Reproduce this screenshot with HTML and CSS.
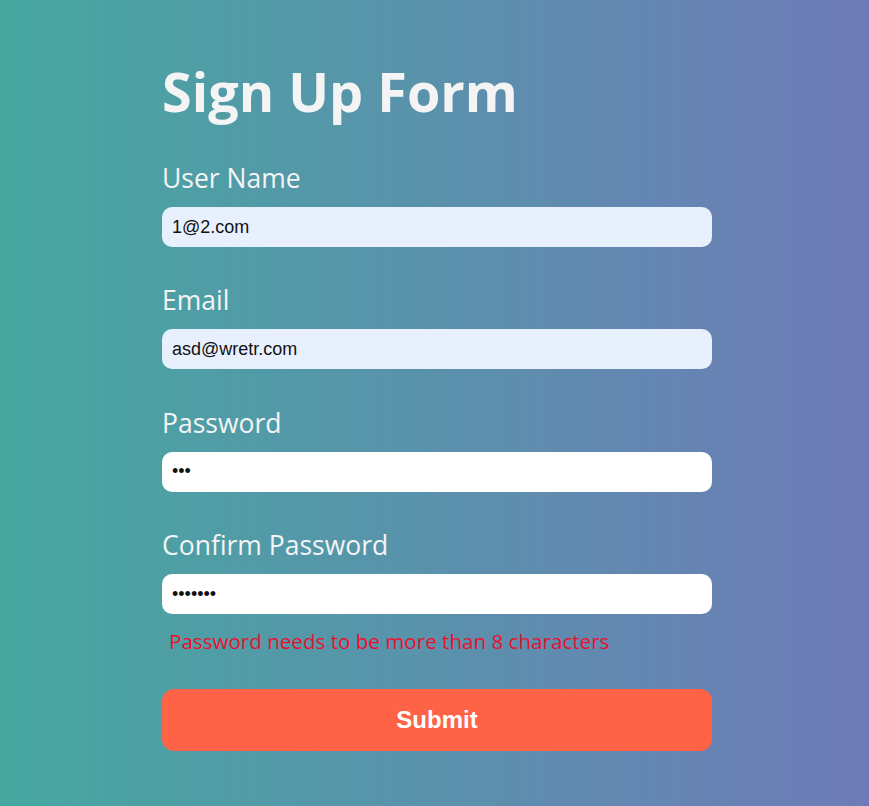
FILE: index.html
```html
<!DOCTYPE html>
<html lang="en">
<head>
<meta charset="utf-8">
<title>Sign Up Form</title>
<link rel="stylesheet" href="styles.css">
</head>
<body>
<main class="page">
  <form class="form">
    <h1 class="title">Sign Up Form</h1>
    <div class="field">
      <label class="label" for="user">User Name</label>
      <input class="input autofill" id="user" type="text" value="1@2.com">
    </div>
    <div class="field">
      <label class="label" for="email">Email</label>
      <input class="input autofill" id="email" type="text" value="asd@wretr.com">
    </div>
    <div class="field">
      <label class="label" for="pw">Password</label>
      <input class="input" id="pw" type="password" value="abc">
    </div>
    <div class="field field-last">
      <label class="label" for="pw2">Confirm Password</label>
      <input class="input" id="pw2" type="password" value="abcdefg">
    </div>
    <p class="error">Password needs to be more than 8 characters</p>
    <button class="submit" type="button">Submit</button>
  </form>
</main>
</body>
</html>
```
FILE: styles.css
```css
html, body {
  margin: 0;
  padding: 0;
}
body {
  min-height: 806px;
  background: linear-gradient(to right, #46a8a0, #6e7bb8);
  font-family: "Open Sans", "Noto Sans", sans-serif;
}
.page {
  padding: 56px 0 0 162px;
}
.form {
  width: 550px;
  display: flex;
  flex-direction: column;
}
.title {
  margin: 0 0 33px;
  font-size: 54px;
  line-height: 70px;
  font-weight: 700;
  color: #f4f4f4;
}
.field {
  display: flex;
  flex-direction: column;
  margin-bottom: 34.4px;
}
.field-last {
  margin-bottom: 12px;
}
.label {
  font-size: 26.5px;
  line-height: 38px;
  color: #f4f4f4;
  margin-bottom: 10px;
}
.input {
  box-sizing: border-box;
  height: 40px;
  border: none;
  border-radius: 10px;
  padding: 0 10px;
  background: #ffffff;
  font-family: "Liberation Sans", Arial, sans-serif;
  font-size: 18px;
  color: #111;
  outline: none;
}
.autofill {
  background: #e8f0fe;
}
.error {
  margin: 0 0 33px 7px;
  font-size: 20.6px;
  line-height: 30px;
  color: #e8112d;
}
.submit {
  height: 62px;
  border: none;
  border-radius: 12px;
  background: #ff6347;
  color: #fff;
  font-family: "Liberation Sans", Arial, sans-serif;
  font-weight: 700;
  font-size: 24px;
  cursor: pointer;
}
```
